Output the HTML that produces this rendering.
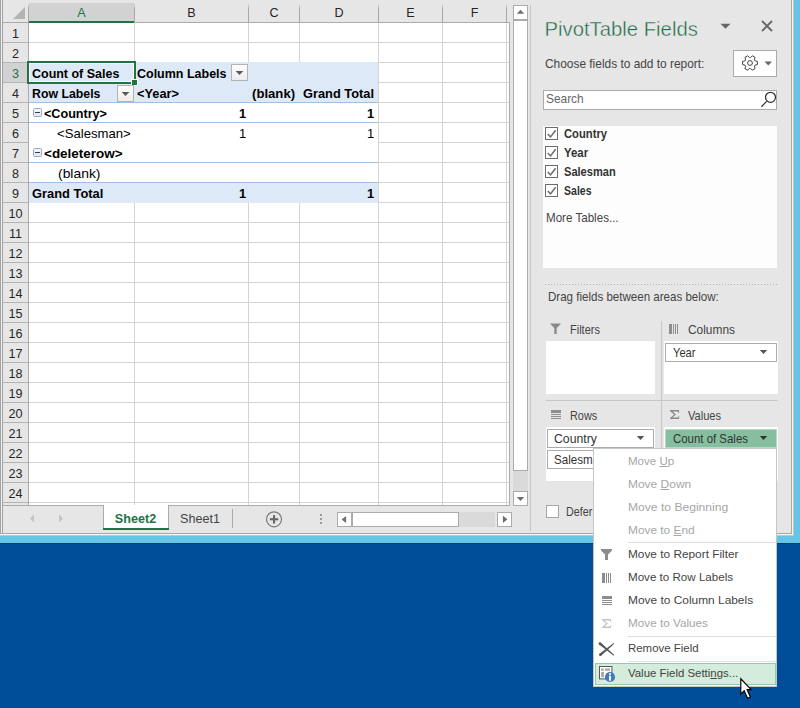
<!DOCTYPE html><html><head><meta charset="utf-8"><style>
html,body{margin:0;padding:0;width:800px;height:708px;overflow:hidden;}
body{position:relative;background:#e6e6e6;font-family:"Liberation Sans",sans-serif;}
div{box-sizing:border-box;}
</style></head><body>
<div style="position:absolute;left:0px;top:536px;width:800px;height:7px;background:#63c6e9"></div>
<div style="position:absolute;left:0px;top:543px;width:800px;height:1px;background:#1f3550"></div>
<div style="position:absolute;left:0px;top:544px;width:800px;height:164px;background:#004e9a"></div>
<div style="position:absolute;left:794px;top:0px;width:6px;height:536px;background:#63c6e9"></div>
<div style="position:absolute;left:791px;top:0px;width:1px;height:534px;background:#a8a8a8"></div>
<div style="position:absolute;left:792px;top:0px;width:1px;height:535px;background:#f4f4f4"></div>
<div style="position:absolute;left:793px;top:0px;width:1px;height:536px;background:#c9c3c3"></div>
<div style="position:absolute;left:0px;top:533px;width:792px;height:1px;background:#a8a8a8"></div>
<div style="position:absolute;left:0px;top:534px;width:793px;height:1px;background:#f4f4f4"></div>
<div style="position:absolute;left:0px;top:535px;width:794px;height:1px;background:#c9c3c3"></div>
<div style="position:absolute;left:0px;top:0px;width:1px;height:533px;background:#a0a0a0"></div>
<div style="position:absolute;left:1px;top:0px;width:1px;height:533px;background:#f4f4f4"></div>
<div style="position:absolute;left:2px;top:0px;width:1px;height:533px;background:#a0a0a0"></div>
<div style="position:absolute;left:29px;top:23px;width:480px;height:482px;background:#fff"></div>
<div style="position:absolute;left:134px;top:23px;width:1px;height:482px;background:#d4d4d4"></div>
<div style="position:absolute;left:248px;top:23px;width:1px;height:482px;background:#d4d4d4"></div>
<div style="position:absolute;left:299px;top:23px;width:1px;height:482px;background:#d4d4d4"></div>
<div style="position:absolute;left:378px;top:23px;width:1px;height:482px;background:#d4d4d4"></div>
<div style="position:absolute;left:442px;top:23px;width:1px;height:482px;background:#d4d4d4"></div>
<div style="position:absolute;left:506px;top:23px;width:1px;height:482px;background:#d4d4d4"></div>
<div style="position:absolute;left:29px;top:42px;width:480px;height:1px;background:#d4d4d4"></div>
<div style="position:absolute;left:29px;top:62px;width:480px;height:1px;background:#d4d4d4"></div>
<div style="position:absolute;left:29px;top:82px;width:480px;height:1px;background:#d4d4d4"></div>
<div style="position:absolute;left:29px;top:102px;width:480px;height:1px;background:#d4d4d4"></div>
<div style="position:absolute;left:29px;top:122px;width:480px;height:1px;background:#d4d4d4"></div>
<div style="position:absolute;left:29px;top:142px;width:480px;height:1px;background:#d4d4d4"></div>
<div style="position:absolute;left:29px;top:162px;width:480px;height:1px;background:#d4d4d4"></div>
<div style="position:absolute;left:29px;top:182px;width:480px;height:1px;background:#d4d4d4"></div>
<div style="position:absolute;left:29px;top:202px;width:480px;height:1px;background:#d4d4d4"></div>
<div style="position:absolute;left:29px;top:222px;width:480px;height:1px;background:#d4d4d4"></div>
<div style="position:absolute;left:29px;top:242px;width:480px;height:1px;background:#d4d4d4"></div>
<div style="position:absolute;left:29px;top:262px;width:480px;height:1px;background:#d4d4d4"></div>
<div style="position:absolute;left:29px;top:282px;width:480px;height:1px;background:#d4d4d4"></div>
<div style="position:absolute;left:29px;top:302px;width:480px;height:1px;background:#d4d4d4"></div>
<div style="position:absolute;left:29px;top:322px;width:480px;height:1px;background:#d4d4d4"></div>
<div style="position:absolute;left:29px;top:342px;width:480px;height:1px;background:#d4d4d4"></div>
<div style="position:absolute;left:29px;top:362px;width:480px;height:1px;background:#d4d4d4"></div>
<div style="position:absolute;left:29px;top:382px;width:480px;height:1px;background:#d4d4d4"></div>
<div style="position:absolute;left:29px;top:402px;width:480px;height:1px;background:#d4d4d4"></div>
<div style="position:absolute;left:29px;top:422px;width:480px;height:1px;background:#d4d4d4"></div>
<div style="position:absolute;left:29px;top:442px;width:480px;height:1px;background:#d4d4d4"></div>
<div style="position:absolute;left:29px;top:462px;width:480px;height:1px;background:#d4d4d4"></div>
<div style="position:absolute;left:29px;top:482px;width:480px;height:1px;background:#d4d4d4"></div>
<div style="position:absolute;left:29px;top:502px;width:480px;height:1px;background:#d4d4d4"></div>
<div style="position:absolute;left:28px;top:3px;width:106px;height:19px;background:#d2d2d2"></div>
<div style="position:absolute;left:28px;top:3px;width:1px;height:19px;background:linear-gradient(#e6e6e6,#a8a8a8 30%,#a8a8a8)"></div>
<div style="position:absolute;left:134px;top:3px;width:1px;height:19px;background:linear-gradient(#e6e6e6,#a8a8a8 30%,#a8a8a8)"></div>
<div style="position:absolute;left:248px;top:3px;width:1px;height:19px;background:linear-gradient(#e6e6e6,#a8a8a8 30%,#a8a8a8)"></div>
<div style="position:absolute;left:299px;top:3px;width:1px;height:19px;background:linear-gradient(#e6e6e6,#a8a8a8 30%,#a8a8a8)"></div>
<div style="position:absolute;left:378px;top:3px;width:1px;height:19px;background:linear-gradient(#e6e6e6,#a8a8a8 30%,#a8a8a8)"></div>
<div style="position:absolute;left:442px;top:3px;width:1px;height:19px;background:linear-gradient(#e6e6e6,#a8a8a8 30%,#a8a8a8)"></div>
<div style="position:absolute;left:506px;top:3px;width:1px;height:19px;background:linear-gradient(#e6e6e6,#a8a8a8 30%,#a8a8a8)"></div>
<div style="position:absolute;left:3px;top:22px;width:506px;height:1px;background:#ababab"></div>
<div style="position:absolute;left:29px;top:21px;width:105px;height:2px;background:#217346"></div>
<svg style="position:absolute;left:0;top:0" width="30" height="22"><polygon points="13,19 25,19 25,7" fill="#b4b4b4"/></svg>
<div style="position:absolute;left:-18.5px;width:200px;text-align:center;top:6.83px;font-size:12.6px;line-height:12.6px;font-weight:400;color:#217346;white-space:pre;">A</div>
<div style="position:absolute;left:91.5px;width:200px;text-align:center;top:6.83px;font-size:12.6px;line-height:12.6px;font-weight:400;color:#262626;white-space:pre;">B</div>
<div style="position:absolute;left:174.0px;width:200px;text-align:center;top:6.83px;font-size:12.6px;line-height:12.6px;font-weight:400;color:#262626;white-space:pre;">C</div>
<div style="position:absolute;left:239.0px;width:200px;text-align:center;top:6.83px;font-size:12.6px;line-height:12.6px;font-weight:400;color:#262626;white-space:pre;">D</div>
<div style="position:absolute;left:310.5px;width:200px;text-align:center;top:6.83px;font-size:12.6px;line-height:12.6px;font-weight:400;color:#262626;white-space:pre;">E</div>
<div style="position:absolute;left:374.5px;width:200px;text-align:center;top:6.83px;font-size:12.6px;line-height:12.6px;font-weight:400;color:#262626;white-space:pre;">F</div>
<div style="position:absolute;left:28px;top:23px;width:1px;height:482px;background:#ababab"></div>
<div style="position:absolute;left:3px;top:63px;width:25px;height:19px;background:#d2d2d2"></div>
<div style="position:absolute;left:3px;top:42px;width:25px;height:1px;background:#b4b4b4"></div>
<div style="position:absolute;left:-84.5px;width:200px;text-align:center;top:27.83px;font-size:12.6px;line-height:12.6px;font-weight:400;color:#262626;white-space:pre;">1</div>
<div style="position:absolute;left:3px;top:62px;width:25px;height:1px;background:#b4b4b4"></div>
<div style="position:absolute;left:-84.5px;width:200px;text-align:center;top:47.83px;font-size:12.6px;line-height:12.6px;font-weight:400;color:#262626;white-space:pre;">2</div>
<div style="position:absolute;left:3px;top:82px;width:25px;height:1px;background:#b4b4b4"></div>
<div style="position:absolute;left:-84.5px;width:200px;text-align:center;top:67.83px;font-size:12.6px;line-height:12.6px;font-weight:400;color:#217346;white-space:pre;">3</div>
<div style="position:absolute;left:3px;top:102px;width:25px;height:1px;background:#b4b4b4"></div>
<div style="position:absolute;left:-84.5px;width:200px;text-align:center;top:87.83px;font-size:12.6px;line-height:12.6px;font-weight:400;color:#262626;white-space:pre;">4</div>
<div style="position:absolute;left:3px;top:122px;width:25px;height:1px;background:#b4b4b4"></div>
<div style="position:absolute;left:-84.5px;width:200px;text-align:center;top:107.83px;font-size:12.6px;line-height:12.6px;font-weight:400;color:#262626;white-space:pre;">5</div>
<div style="position:absolute;left:3px;top:142px;width:25px;height:1px;background:#b4b4b4"></div>
<div style="position:absolute;left:-84.5px;width:200px;text-align:center;top:127.83px;font-size:12.6px;line-height:12.6px;font-weight:400;color:#262626;white-space:pre;">6</div>
<div style="position:absolute;left:3px;top:162px;width:25px;height:1px;background:#b4b4b4"></div>
<div style="position:absolute;left:-84.5px;width:200px;text-align:center;top:147.83px;font-size:12.6px;line-height:12.6px;font-weight:400;color:#262626;white-space:pre;">7</div>
<div style="position:absolute;left:3px;top:182px;width:25px;height:1px;background:#b4b4b4"></div>
<div style="position:absolute;left:-84.5px;width:200px;text-align:center;top:167.83px;font-size:12.6px;line-height:12.6px;font-weight:400;color:#262626;white-space:pre;">8</div>
<div style="position:absolute;left:3px;top:202px;width:25px;height:1px;background:#b4b4b4"></div>
<div style="position:absolute;left:-84.5px;width:200px;text-align:center;top:187.83px;font-size:12.6px;line-height:12.6px;font-weight:400;color:#262626;white-space:pre;">9</div>
<div style="position:absolute;left:3px;top:222px;width:25px;height:1px;background:#b4b4b4"></div>
<div style="position:absolute;left:-84.5px;width:200px;text-align:center;top:207.83px;font-size:12.6px;line-height:12.6px;font-weight:400;color:#262626;white-space:pre;">10</div>
<div style="position:absolute;left:3px;top:242px;width:25px;height:1px;background:#b4b4b4"></div>
<div style="position:absolute;left:-84.5px;width:200px;text-align:center;top:227.83px;font-size:12.6px;line-height:12.6px;font-weight:400;color:#262626;white-space:pre;">11</div>
<div style="position:absolute;left:3px;top:262px;width:25px;height:1px;background:#b4b4b4"></div>
<div style="position:absolute;left:-84.5px;width:200px;text-align:center;top:247.83px;font-size:12.6px;line-height:12.6px;font-weight:400;color:#262626;white-space:pre;">12</div>
<div style="position:absolute;left:3px;top:282px;width:25px;height:1px;background:#b4b4b4"></div>
<div style="position:absolute;left:-84.5px;width:200px;text-align:center;top:267.83px;font-size:12.6px;line-height:12.6px;font-weight:400;color:#262626;white-space:pre;">13</div>
<div style="position:absolute;left:3px;top:302px;width:25px;height:1px;background:#b4b4b4"></div>
<div style="position:absolute;left:-84.5px;width:200px;text-align:center;top:287.83px;font-size:12.6px;line-height:12.6px;font-weight:400;color:#262626;white-space:pre;">14</div>
<div style="position:absolute;left:3px;top:322px;width:25px;height:1px;background:#b4b4b4"></div>
<div style="position:absolute;left:-84.5px;width:200px;text-align:center;top:307.83px;font-size:12.6px;line-height:12.6px;font-weight:400;color:#262626;white-space:pre;">15</div>
<div style="position:absolute;left:3px;top:342px;width:25px;height:1px;background:#b4b4b4"></div>
<div style="position:absolute;left:-84.5px;width:200px;text-align:center;top:327.83px;font-size:12.6px;line-height:12.6px;font-weight:400;color:#262626;white-space:pre;">16</div>
<div style="position:absolute;left:3px;top:362px;width:25px;height:1px;background:#b4b4b4"></div>
<div style="position:absolute;left:-84.5px;width:200px;text-align:center;top:347.83px;font-size:12.6px;line-height:12.6px;font-weight:400;color:#262626;white-space:pre;">17</div>
<div style="position:absolute;left:3px;top:382px;width:25px;height:1px;background:#b4b4b4"></div>
<div style="position:absolute;left:-84.5px;width:200px;text-align:center;top:367.83px;font-size:12.6px;line-height:12.6px;font-weight:400;color:#262626;white-space:pre;">18</div>
<div style="position:absolute;left:3px;top:402px;width:25px;height:1px;background:#b4b4b4"></div>
<div style="position:absolute;left:-84.5px;width:200px;text-align:center;top:387.83px;font-size:12.6px;line-height:12.6px;font-weight:400;color:#262626;white-space:pre;">19</div>
<div style="position:absolute;left:3px;top:422px;width:25px;height:1px;background:#b4b4b4"></div>
<div style="position:absolute;left:-84.5px;width:200px;text-align:center;top:407.83px;font-size:12.6px;line-height:12.6px;font-weight:400;color:#262626;white-space:pre;">20</div>
<div style="position:absolute;left:3px;top:442px;width:25px;height:1px;background:#b4b4b4"></div>
<div style="position:absolute;left:-84.5px;width:200px;text-align:center;top:427.83px;font-size:12.6px;line-height:12.6px;font-weight:400;color:#262626;white-space:pre;">21</div>
<div style="position:absolute;left:3px;top:462px;width:25px;height:1px;background:#b4b4b4"></div>
<div style="position:absolute;left:-84.5px;width:200px;text-align:center;top:447.83px;font-size:12.6px;line-height:12.6px;font-weight:400;color:#262626;white-space:pre;">22</div>
<div style="position:absolute;left:3px;top:482px;width:25px;height:1px;background:#b4b4b4"></div>
<div style="position:absolute;left:-84.5px;width:200px;text-align:center;top:467.83px;font-size:12.6px;line-height:12.6px;font-weight:400;color:#262626;white-space:pre;">23</div>
<div style="position:absolute;left:3px;top:502px;width:25px;height:1px;background:#b4b4b4"></div>
<div style="position:absolute;left:-84.5px;width:200px;text-align:center;top:487.83px;font-size:12.6px;line-height:12.6px;font-weight:400;color:#262626;white-space:pre;">24</div>
<div style="position:absolute;left:509px;top:22px;width:1px;height:484px;background:#ababab"></div>
<div style="position:absolute;left:3px;top:505px;width:507px;height:1px;background:#ababab"></div>
<div style="position:absolute;left:29px;top:62px;width:349px;height:141px;background:#fff"></div>
<div style="position:absolute;left:29px;top:62px;width:349px;height:40px;background:#dde9f6"></div>
<div style="position:absolute;left:29px;top:183px;width:349px;height:20px;background:#dde9f6"></div>
<div style="position:absolute;left:29px;top:102px;width:349px;height:1px;background:#9bc2e6"></div>
<div style="position:absolute;left:29px;top:122px;width:349px;height:1px;background:#9bc2e6"></div>
<div style="position:absolute;left:29px;top:162px;width:349px;height:1px;background:#9bc2e6"></div>
<div style="position:absolute;left:29px;top:182px;width:349px;height:1px;background:#9bc2e6"></div>
<div style="position:absolute;left:27px;top:61px;width:109px;height:23px;border:2px solid #217346"></div>
<div style="position:absolute;left:29px;top:63px;width:105px;height:19px;border:1px solid #fff"></div>
<div style="position:absolute;left:131px;top:79px;width:7px;height:7px;background:#217346;border:1px solid #fff"></div>
<div style="position:absolute;left:231px;top:64px;width:17px;height:17px;background:linear-gradient(#fdfdfd,#ececec);border:1px solid #b3b3b3"></div>
<svg style="position:absolute;left:231px;top:64px" width="17" height="17"><polygon points="4.6,7 12.4,7 8.5,11" fill="#5a5a5a"/></svg>
<div style="position:absolute;left:117px;top:85px;width:17px;height:17px;background:linear-gradient(#fdfdfd,#ececec);border:1px solid #b3b3b3"></div>
<svg style="position:absolute;left:117px;top:85px" width="17" height="17"><polygon points="4.6,7 12.4,7 8.5,11" fill="#5a5a5a"/></svg>
<div style="position:absolute;left:33px;top:108px;width:9px;height:9px;background:linear-gradient(#f6f6f6,#e6e6e6);border:1px solid #98aac8;border-radius:1.5px"></div>
<div style="position:absolute;left:35px;top:112px;width:5px;height:1px;background:#2b3a72"></div>
<div style="position:absolute;left:33px;top:148px;width:9px;height:9px;background:linear-gradient(#f6f6f6,#e6e6e6);border:1px solid #98aac8;border-radius:1.5px"></div>
<div style="position:absolute;left:35px;top:152px;width:5px;height:1px;background:#2b3a72"></div>
<div style="position:absolute;left:31.50px;top:67.66px;font-size:12.8px;line-height:12.8px;font-weight:700;color:#000;white-space:pre;transform-origin:0 0;transform:scaleX(0.9747);">Count of Sales</div>
<div style="position:absolute;left:137.30px;top:67.66px;font-size:12.8px;line-height:12.8px;font-weight:700;color:#000;white-space:pre;transform-origin:0 0;transform:scaleX(0.9759);">Column Labels</div>
<div style="position:absolute;left:31.50px;top:87.66px;font-size:12.8px;line-height:12.8px;font-weight:700;color:#000;white-space:pre;transform-origin:0 0;transform:scaleX(0.9621);">Row Labels</div>
<div style="position:absolute;left:137.30px;top:87.66px;font-size:12.8px;line-height:12.8px;font-weight:700;color:#000;white-space:pre;transform-origin:0 0;transform:scaleX(0.9996);">&lt;Year&gt;</div>
<div style="position:absolute;left:251.60px;top:87.66px;font-size:12.8px;line-height:12.8px;font-weight:700;color:#000;white-space:pre;transform-origin:0 0;transform:scaleX(1.0268);">(blank)</div>
<div style="position:absolute;left:302.80px;top:87.66px;font-size:12.8px;line-height:12.8px;font-weight:700;color:#000;white-space:pre;transform-origin:0 0;transform:scaleX(1.0014);">Grand Total</div>
<div style="position:absolute;left:44.30px;top:107.66px;font-size:12.8px;line-height:12.8px;font-weight:700;color:#000;white-space:pre;transform-origin:0 0;transform:scaleX(0.9839);">&lt;Country&gt;</div>
<div style="position:absolute;right:554px;top:107.66px;font-size:12.8px;line-height:12.8px;font-weight:700;color:#000;white-space:pre;transform-origin:100% 0;">1</div>
<div style="position:absolute;right:426px;top:107.66px;font-size:12.8px;line-height:12.8px;font-weight:700;color:#000;white-space:pre;transform-origin:100% 0;">1</div>
<div style="position:absolute;left:57.00px;top:127.66px;font-size:12.8px;line-height:12.8px;font-weight:400;color:#000;white-space:pre;transform-origin:0 0;transform:scaleX(1.0255);">&lt;Salesman&gt;</div>
<div style="position:absolute;right:554px;top:127.66px;font-size:12.8px;line-height:12.8px;font-weight:400;color:#000;white-space:pre;transform-origin:100% 0;">1</div>
<div style="position:absolute;right:426px;top:127.66px;font-size:12.8px;line-height:12.8px;font-weight:400;color:#000;white-space:pre;transform-origin:100% 0;">1</div>
<div style="position:absolute;left:44.30px;top:147.66px;font-size:12.8px;line-height:12.8px;font-weight:700;color:#000;white-space:pre;transform-origin:0 0;transform:scaleX(1.0538);">&lt;deleterow&gt;</div>
<div style="position:absolute;left:57.50px;top:167.66px;font-size:12.8px;line-height:12.8px;font-weight:400;color:#000;white-space:pre;transform-origin:0 0;transform:scaleX(1.0861);">(blank)</div>
<div style="position:absolute;left:31.60px;top:187.66px;font-size:12.8px;line-height:12.8px;font-weight:700;color:#000;white-space:pre;transform-origin:0 0;transform:scaleX(1.0057);">Grand Total</div>
<div style="position:absolute;right:554px;top:187.66px;font-size:12.8px;line-height:12.8px;font-weight:700;color:#000;white-space:pre;transform-origin:100% 0;">1</div>
<div style="position:absolute;right:426px;top:187.66px;font-size:12.8px;line-height:12.8px;font-weight:700;color:#000;white-space:pre;transform-origin:100% 0;">1</div>
<div style="position:absolute;left:530px;top:5px;width:1px;height:526px;background:#c6c6c6"></div>
<div style="position:absolute;left:513px;top:5px;width:15px;height:500px;background:#dadada"></div>
<div style="position:absolute;left:513px;top:5px;width:15px;height:15px;background:#fff;border:1px solid #ababab"></div>
<svg style="position:absolute;left:513px;top:5px" width="15" height="15"><polygon points="3.8,8.8 11.2,8.8 7.5,4.8" fill="#6e6e6e"/></svg>
<div style="position:absolute;left:513px;top:19px;width:15px;height:452px;background:#fff;border:1px solid #ababab;border-top:2px solid #ababab"></div>
<div style="position:absolute;left:513px;top:491px;width:15px;height:15px;background:#fff;border:1px solid #ababab"></div>
<svg style="position:absolute;left:513px;top:491px" width="15" height="15"><polygon points="3.8,6.1 11.2,6.1 7.5,10" fill="#6e6e6e"/></svg>
<svg style="position:absolute;left:26px;top:510px" width="45" height="16"><polygon points="8,4.5 8,12.5 4,8.5" fill="#c4c4c4"/><polygon points="33,4.5 33,12.5 37,8.5" fill="#c4c4c4"/></svg>
<div style="position:absolute;left:103px;top:505px;width:66px;height:25px;background:#fff;border-left:1px solid #ababab;border-right:1px solid #ababab"></div>
<div style="position:absolute;left:103px;top:528px;width:66px;height:2px;background:#217346"></div>
<div style="position:absolute;left:35.5px;width:200px;text-align:center;top:512.83px;font-size:12.6px;line-height:12.6px;font-weight:700;color:#217346;white-space:pre;">Sheet2</div>
<div style="position:absolute;left:100px;width:200px;text-align:center;top:512.83px;font-size:12.6px;line-height:12.6px;font-weight:400;color:#444;white-space:pre;">Sheet1</div>
<div style="position:absolute;left:232px;top:509px;width:1px;height:19px;background:#ababab"></div>
<svg style="position:absolute;left:264px;top:509px" width="20" height="20"><circle cx="10" cy="10.3" r="7.5" fill="none" stroke="#7a7a7a" stroke-width="1.2"/><rect x="9" y="6.2" width="2.1" height="8.3" fill="#666"/><rect x="5.9" y="9.2" width="8.3" height="2.1" fill="#666"/></svg>
<div style="position:absolute;left:320px;top:514px;width:2px;height:2px;background:#9a9a9a"></div>
<div style="position:absolute;left:320px;top:518px;width:2px;height:2px;background:#9a9a9a"></div>
<div style="position:absolute;left:320px;top:522px;width:2px;height:2px;background:#9a9a9a"></div>
<div style="position:absolute;left:352px;top:512px;width:143px;height:15px;background:#dadada"></div>
<div style="position:absolute;left:337px;top:512px;width:15px;height:15px;background:#fff;border:1px solid #ababab"></div>
<svg style="position:absolute;left:337px;top:512px" width="15" height="15"><polygon points="9.1,3.9 9.1,11 4.6,7.45" fill="#6e6e6e"/></svg>
<div style="position:absolute;left:351px;top:512px;width:108px;height:15px;background:#fff;border:1px solid #ababab;border-left:2px solid #ababab"></div>
<div style="position:absolute;left:497px;top:512px;width:15px;height:15px;background:#fff;border:1px solid #ababab"></div>
<svg style="position:absolute;left:497px;top:512px" width="15" height="15"><polygon points="5.9,3.7 5.9,11 10.4,7.35" fill="#6e6e6e"/></svg>
<div style="position:absolute;left:544.5px;top:19.32px;font-size:20.3px;line-height:20.3px;font-weight:400;color:#1b6a47;white-space:pre;transform-origin:0 0;-webkit-text-stroke:0.4px #e6e6e6;">PivotTable Fields</div>
<svg style="position:absolute;left:719px;top:22px" width="14" height="10"><polygon points="1.5,1.8 11.5,1.8 6.5,6.8" fill="#666"/></svg>
<svg style="position:absolute;left:760px;top:19px" width="14" height="14"><path d="M2,2 L12,12 M12,2 L2,12" stroke="#666" stroke-width="1.8"/></svg>
<div style="position:absolute;left:544.70px;top:59.43px;font-size:11.9px;line-height:11.9px;font-weight:400;color:#444;white-space:pre;transform-origin:0 0;transform:scaleX(1.0007);">Choose fields to add to report:</div>
<div style="position:absolute;left:733px;top:50px;width:44px;height:27px;background:#fff;border:1px solid #ababab"></div>
<svg style="position:absolute;left:742px;top:54.6px" width="16" height="16"><path d="M12.93,5.80 L15.43,6.42 L15.43,9.58 L12.93,10.20 L12.37,11.17 L13.09,13.65 L10.35,15.23 L8.56,13.37 L7.44,13.37 L5.65,15.23 L2.91,13.65 L3.63,11.17 L3.07,10.20 L0.57,9.58 L0.57,6.42 L3.07,5.80 L3.63,4.83 L2.91,2.35 L5.65,0.77 L7.44,2.63 L8.56,2.63 L10.35,0.77 L13.09,2.35 L12.37,4.83 Z" fill="none" stroke="#444" stroke-width="1.0" stroke-linejoin="round"/><circle cx="8" cy="8" r="2.4" fill="none" stroke="#444" stroke-width="1.0"/></svg>
<svg style="position:absolute;left:763px;top:60px" width="10" height="8"><polygon points="1.5,1.5 9,1.5 5.25,5.5" fill="#666"/></svg>
<div style="position:absolute;left:543px;top:90px;width:234px;height:20px;background:#fff;border:1px solid #ababab"></div>
<div style="position:absolute;left:546px;top:94.43px;font-size:11.9px;line-height:11.9px;font-weight:400;color:#666;white-space:pre;transform-origin:0 0;">Search</div>
<svg style="position:absolute;left:758px;top:90px" width="20" height="20"><circle cx="12.5" cy="7.3" r="5" fill="none" stroke="#333" stroke-width="1.3"/><path d="M8.6,11.4 L3.4,16.8" stroke="#333" stroke-width="1.3"/></svg>
<div style="position:absolute;left:543px;top:126px;width:234px;height:142px;background:#fdfdfd"></div>
<div style="position:absolute;left:545px;top:127px;width:13px;height:13px;background:#fff;border:1px solid #6d6d6d"></div>
<svg style="position:absolute;left:545px;top:127px" width="13" height="13"><path d="M2.8,7 L5.5,9.9 L10.6,3.3" fill="none" stroke="#6a6a6a" stroke-width="1.5"/></svg>
<div style="position:absolute;left:564.30px;top:128.47px;font-size:12.2px;line-height:12.2px;font-weight:700;color:#333;white-space:pre;transform-origin:0 0;transform:scaleX(0.9204);">Country</div>
<div style="position:absolute;left:545px;top:146px;width:13px;height:13px;background:#fff;border:1px solid #6d6d6d"></div>
<svg style="position:absolute;left:545px;top:146px" width="13" height="13"><path d="M2.8,7 L5.5,9.9 L10.6,3.3" fill="none" stroke="#6a6a6a" stroke-width="1.5"/></svg>
<div style="position:absolute;left:564.30px;top:147.47px;font-size:12.2px;line-height:12.2px;font-weight:700;color:#333;white-space:pre;transform-origin:0 0;transform:scaleX(0.9380);">Year</div>
<div style="position:absolute;left:545px;top:165px;width:13px;height:13px;background:#fff;border:1px solid #6d6d6d"></div>
<svg style="position:absolute;left:545px;top:165px" width="13" height="13"><path d="M2.8,7 L5.5,9.9 L10.6,3.3" fill="none" stroke="#6a6a6a" stroke-width="1.5"/></svg>
<div style="position:absolute;left:564.30px;top:166.47px;font-size:12.2px;line-height:12.2px;font-weight:700;color:#333;white-space:pre;transform-origin:0 0;transform:scaleX(0.9085);">Salesman</div>
<div style="position:absolute;left:545px;top:184px;width:13px;height:13px;background:#fff;border:1px solid #6d6d6d"></div>
<svg style="position:absolute;left:545px;top:184px" width="13" height="13"><path d="M2.8,7 L5.5,9.9 L10.6,3.3" fill="none" stroke="#6a6a6a" stroke-width="1.5"/></svg>
<div style="position:absolute;left:564.30px;top:185.47px;font-size:12.2px;line-height:12.2px;font-weight:700;color:#333;white-space:pre;transform-origin:0 0;transform:scaleX(0.8637);">Sales</div>
<div style="position:absolute;left:545.60px;top:213.43px;font-size:11.9px;line-height:11.9px;font-weight:400;color:#444;white-space:pre;transform-origin:0 0;transform:scaleX(0.9748);">More Tables...</div>
<div style="position:absolute;left:545px;top:284px;width:233px;height:1px;background-image:linear-gradient(90deg,#b4b4b4 1px,transparent 1px);background-size:3px 1px"></div>
<div style="position:absolute;left:547.60px;top:292.43px;font-size:11.9px;line-height:11.9px;font-weight:400;color:#444;white-space:pre;transform-origin:0 0;transform:scaleX(0.9714);">Drag fields between areas below:</div>
<div style="position:absolute;left:661px;top:321px;width:1px;height:213px;background:#c6c6c6"></div>
<div style="position:absolute;left:546px;top:400px;width:232px;height:1px;background:#c6c6c6"></div>
<svg style="position:absolute;left:549px;top:322px" width="14" height="14"><path d="M1,1.5 L12,1.5 L7.7,6.3 L7.7,12 L5.3,12 L5.3,6.3 Z" fill="#8a8a8a"/></svg>
<div style="position:absolute;left:569.50px;top:325.43px;font-size:11.9px;line-height:11.9px;font-weight:400;color:#444;white-space:pre;transform-origin:0 0;transform:scaleX(0.9253);">Filters</div>
<div style="position:absolute;left:546px;top:341px;width:109px;height:53px;background:#fff"></div>
<svg style="position:absolute;left:669px;top:324px" width="12" height="12"><rect x="0" y="0" width="3" height="10" fill="#8e8e8e"/><rect x="4" y="0" width="1" height="10" fill="#8e8e8e"/><rect x="6" y="0" width="1" height="10" fill="#8e8e8e"/><rect x="8" y="0" width="1" height="10" fill="#8e8e8e"/></svg>
<div style="position:absolute;left:687.50px;top:325.43px;font-size:11.9px;line-height:11.9px;font-weight:400;color:#444;white-space:pre;transform-origin:0 0;transform:scaleX(1.0006);">Columns</div>
<div style="position:absolute;left:664px;top:341px;width:114px;height:53px;background:#fff"></div>
<div style="position:absolute;left:665px;top:343px;width:112px;height:19px;background:#fff;border:1px solid #ababab"></div>
<div style="position:absolute;left:672.50px;top:348.43px;font-size:11.9px;line-height:11.9px;font-weight:400;color:#333;white-space:pre;transform-origin:0 0;transform:scaleX(0.9350);">Year</div>
<svg style="position:absolute;left:758px;top:348px" width="12" height="8"><polygon points="1.8,2 9.2,2 5.5,6" fill="#555"/></svg>
<svg style="position:absolute;left:551px;top:410px" width="12" height="12"><rect x="0" y="0" width="10" height="3" fill="#8e8e8e"/><rect x="0" y="4" width="10" height="1" fill="#8e8e8e"/><rect x="0" y="6" width="10" height="1" fill="#8e8e8e"/><rect x="0" y="8" width="10" height="1" fill="#8e8e8e"/></svg>
<div style="position:absolute;left:569.70px;top:411.43px;font-size:11.9px;line-height:11.9px;font-weight:400;color:#444;white-space:pre;transform-origin:0 0;transform:scaleX(0.9131);">Rows</div>
<div style="position:absolute;left:546px;top:427px;width:109px;height:54px;background:#fff"></div>
<div style="position:absolute;left:547px;top:429px;width:107px;height:19px;background:#fff;border:1px solid #ababab"></div>
<div style="position:absolute;left:554.00px;top:434.43px;font-size:11.9px;line-height:11.9px;font-weight:400;color:#333;white-space:pre;transform-origin:0 0;transform:scaleX(1.0290);">Country</div>
<svg style="position:absolute;left:635px;top:434px" width="12" height="8"><polygon points="1.8,2 9.2,2 5.5,6" fill="#555"/></svg>
<div style="position:absolute;left:547px;top:450px;width:107px;height:19px;background:#fff;border:1px solid #ababab"></div>
<div style="position:absolute;left:554.00px;top:455.43px;font-size:11.9px;line-height:11.9px;font-weight:400;color:#333;white-space:pre;transform-origin:0 0;transform:scaleX(0.9759);">Salesman</div>
<svg style="position:absolute;left:670px;top:410px" width="12" height="12"><path d="M0,0 L9,0 L9.2,2.8 L8.4,2.8 L7.8,1.6 L2.6,1.6 L5.9,4.5 L2.4,7.6 L8,7.6 L8.5,6.3 L9.2,6.3 L9,9 L0,9 L0,8.2 L4,4.5 L0,0.9 Z" fill="#8a8a8a"/></svg>
<div style="position:absolute;left:687.50px;top:411.43px;font-size:11.9px;line-height:11.9px;font-weight:400;color:#444;white-space:pre;transform-origin:0 0;transform:scaleX(0.9316);">Values</div>
<div style="position:absolute;left:664px;top:427px;width:114px;height:54px;background:#fff"></div>
<div style="position:absolute;left:665px;top:429px;width:112px;height:19px;background:#86bf9f;border:1px solid #b5d9c4"></div>
<div style="position:absolute;left:672.80px;top:434.43px;font-size:11.9px;line-height:11.9px;font-weight:400;color:#333;white-space:pre;transform-origin:0 0;transform:scaleX(0.9609);">Count of Sales</div>
<svg style="position:absolute;left:758px;top:434px" width="12" height="8"><polygon points="1.8,2 9.2,2 5.5,6" fill="#333"/></svg>
<div style="position:absolute;left:546px;top:505px;width:13px;height:13px;background:#fff;border:1px solid #a6a6a6"></div>
<div style="position:absolute;left:566.00px;top:507.43px;font-size:11.9px;line-height:11.9px;font-weight:400;color:#444;white-space:pre;transform-origin:0 0;transform:scaleX(0.9033);">Defer</div>
<div style="position:absolute;left:593px;top:448px;width:184px;height:239px;background:#fff;border:1px solid #c6c6c6"></div>
<div style="position:absolute;left:595px;top:663px;width:181px;height:22px;background:#d3ecdb;border:1px solid #8fcfa5"></div>
<div style="position:absolute;left:628.40px;top:456.31px;font-size:11.8px;line-height:11.8px;font-weight:400;color:#a6a6a6;white-space:pre;transform-origin:0 0;transform:scaleX(0.9781);">Move <u>U</u>p</div>
<div style="position:absolute;left:628.40px;top:479.31px;font-size:11.8px;line-height:11.8px;font-weight:400;color:#a6a6a6;white-space:pre;transform-origin:0 0;transform:scaleX(1.0142);">Move <u>D</u>own</div>
<div style="position:absolute;left:628.40px;top:502.31px;font-size:11.8px;line-height:11.8px;font-weight:400;color:#a6a6a6;white-space:pre;transform-origin:0 0;transform:scaleX(1.0252);">Move to Be<u>g</u>inning</div>
<div style="position:absolute;left:628.40px;top:525.31px;font-size:11.8px;line-height:11.8px;font-weight:400;color:#a6a6a6;white-space:pre;transform-origin:0 0;transform:scaleX(1.0050);">Move to <u>E</u>nd</div>
<div style="position:absolute;left:628.40px;top:549.31px;font-size:11.8px;line-height:11.8px;font-weight:400;color:#444;white-space:pre;transform-origin:0 0;transform:scaleX(1.0035);">Move to Report Filter</div>
<div style="position:absolute;left:628.40px;top:572.31px;font-size:11.8px;line-height:11.8px;font-weight:400;color:#444;white-space:pre;transform-origin:0 0;transform:scaleX(0.9833);">Move to Row Labels</div>
<div style="position:absolute;left:628.40px;top:595.31px;font-size:11.8px;line-height:11.8px;font-weight:400;color:#444;white-space:pre;transform-origin:0 0;transform:scaleX(1.0094);">Move to Column Labels</div>
<div style="position:absolute;left:628.40px;top:618.31px;font-size:11.8px;line-height:11.8px;font-weight:400;color:#a6a6a6;white-space:pre;transform-origin:0 0;transform:scaleX(0.9933);">Move to Values</div>
<div style="position:absolute;left:628.40px;top:643.31px;font-size:11.8px;line-height:11.8px;font-weight:400;color:#444;white-space:pre;transform-origin:0 0;transform:scaleX(0.9693);">Remove Field</div>
<div style="position:absolute;left:628.40px;top:668.31px;font-size:11.8px;line-height:11.8px;font-weight:400;color:#444;white-space:pre;transform-origin:0 0;transform:scaleX(0.9683);">Value Field Setti<u>n</u>gs...</div>
<svg style="position:absolute;left:596px;top:545px" width="22" height="90"><polygon points="5,4 16,4 16,5.5 12,9.5 12,15 9,15 9,9.5 5,5.5" fill="#8c8c8c"/><rect x="6" y="28" width="3" height="10" fill="#8c8c8c"/><rect x="10" y="28" width="1" height="10" fill="#8c8c8c"/><rect x="12" y="28" width="1" height="10" fill="#8c8c8c"/><rect x="14" y="28" width="1" height="10" fill="#8c8c8c"/><rect x="6" y="51" width="10" height="3" fill="#8c8c8c"/><rect x="6" y="55" width="10" height="1" fill="#8c8c8c"/><rect x="6" y="57" width="10" height="1" fill="#8c8c8c"/><rect x="6" y="59" width="10" height="1" fill="#8c8c8c"/><path transform="translate(6,74)" d="M0,0 L9,0 L9.2,2.8 L8.4,2.8 L7.8,1.6 L2.6,1.6 L5.9,4.5 L2.4,7.6 L8,7.6 L8.5,6.3 L9.2,6.3 L9,9 L0,9 L0,8.2 L4,4.5 L0,0.9 Z" fill="#c4c4c4"/></svg>
<svg style="position:absolute;left:596px;top:640px" width="22" height="20"><polygon points="3.07,4.60 17.71,15.65 18.29,14.95 4.73,2.60" fill="#575757"/><circle cx="3.90" cy="3.60" r="1.3" fill="#575757"/><polygon points="5.13,15.80 18.29,3.75 17.71,3.05 3.47,13.80" fill="#575757"/><circle cx="4.30" cy="14.80" r="1.3" fill="#575757"/></svg>
<svg style="position:absolute;left:596px;top:663px" width="22" height="22"><rect x="3.5" y="3.5" width="12.4" height="12.4" fill="#fff" stroke="#585858" stroke-width="1"/><rect x="5.2" y="5.5" width="2.6" height="2.2" fill="#a4a4a4"/><rect x="9" y="5.5" width="5" height="2.2" fill="#a4a4a4"/><rect x="5.2" y="9" width="2.6" height="5.3" fill="#a4a4a4"/><circle cx="14" cy="14" r="5.1" fill="#3f7bbd"/><circle cx="14" cy="11.1" r="1" fill="#fff"/><rect x="13.05" y="12.7" width="1.9" height="5" fill="#fff"/></svg>
<svg style="position:absolute;left:739px;top:677px" width="16" height="24"><path d="M1.8,1.8 L1.8,17.2 L5.2,13.8 L8.5,21.2 L11.4,20 L8.1,12.6 L12.2,12.6 Z" fill="#fff" stroke="#000" stroke-width="1.15" stroke-linejoin="miter"/></svg>
<div style="position:absolute;left:628px;top:542px;width:148px;height:1px;background:#e0e0e0"></div>
<div style="position:absolute;left:628px;top:636px;width:148px;height:1px;background:#e0e0e0"></div>
<div style="position:absolute;left:628px;top:661px;width:148px;height:1px;background:#e0e0e0"></div>
</body></html>
